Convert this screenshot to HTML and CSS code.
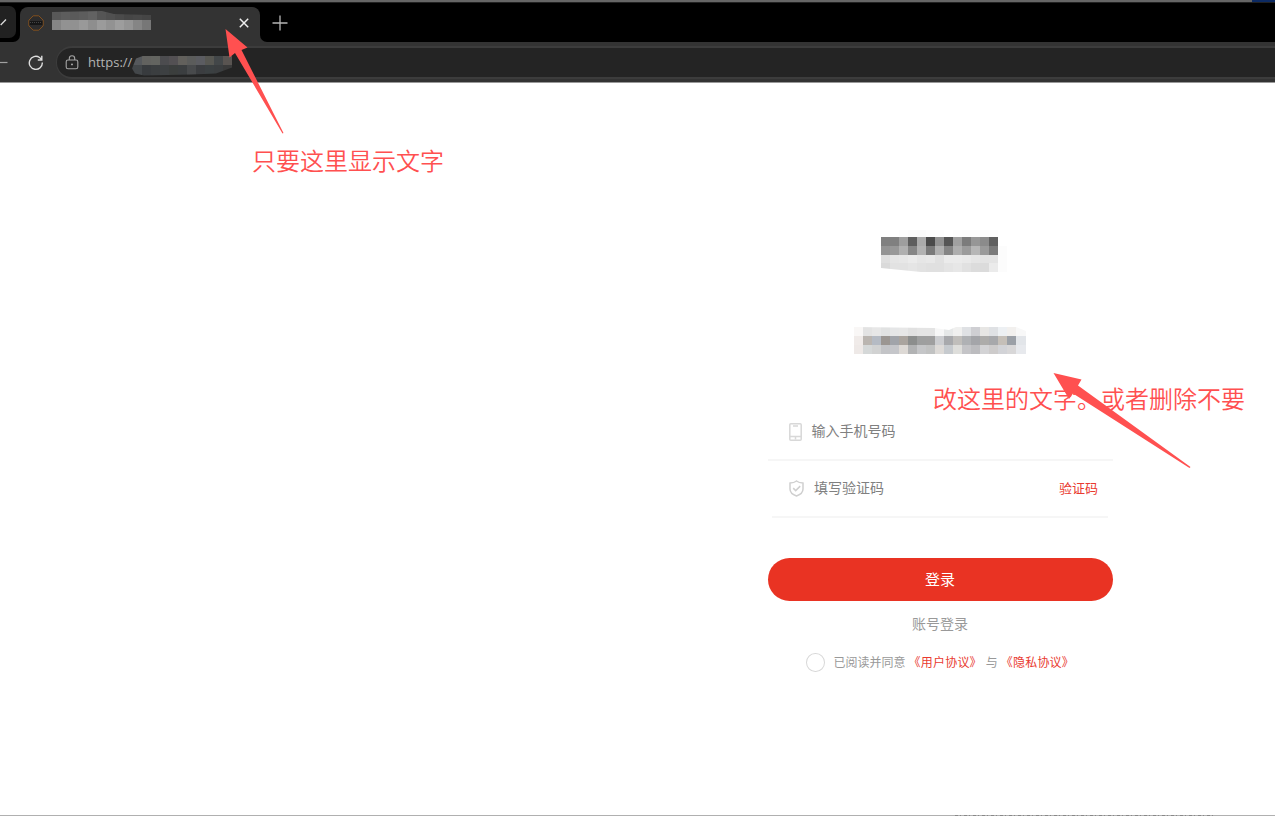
FILE: index.html
```
<!DOCTYPE html>
<html lang="zh-CN">
<head>
  <meta charset="UTF-8" />
  <meta name="viewport" content="width=device-width, initial-scale=1.0"/>
  <title>登录</title>
  <link rel="stylesheet" href="styles.css">
</head>
<body>
  <div class="desktop-edge"><span></span></div>

  <header class="browser">
    <div class="tabs">
      <div class="tab-list">
        <svg width="16" height="35" viewBox="0 0 16 35"><path d="M0 20.800l5.800-6" fill="none" stroke="#ddd" stroke-width="1.400"/></svg>
      </div>
      <div class="tab">
        <svg class="favicon" width="16" height="16" viewBox="0 0 16 16">
          <path d="M5.2.8h5.6l4.4 4.4v5.6l-4.4 4.4H5.2L.8 10.800V5.200z" fill="#2d2c2c" stroke="#82501f"/>
          <path d="M1.500 6h13v4h-13z" fill="#161616"/>
          <path d="M2 7.500h12" stroke="#444" stroke-dasharray="1 1"/>
        </svg>
        <svg class="mosaic tab-title" id="tabTitle" width="99" height="19"></svg>
        <svg class="close" width="10" height="10" viewBox="0 0 10 10"><path d="M.8.8l8.400 8.400M9.200.8L.8 9.200" stroke="#eee" stroke-width="1.500"/></svg>
      </div>
      <div class="tab-rest">
        <svg class="new-tab" width="16" height="16" viewBox="0 0 16 16"><path d="M8 .5v15M.5 8h15" stroke="#b5b5b5" stroke-width="1.300"/></svg>
      </div>
    </div>
    <div class="toolbar">
      <svg class="back" width="8" height="16" viewBox="0 0 8 16"><path d="M0 7.500h7.500" stroke="#a0a0a0" stroke-width="1.200"/></svg>
      <svg class="reload" width="16" height="16" viewBox="0 0 16 16"><path d="M14.300 7.500A6.500 6.500 0 1 1 11.500 2.500L13.500 4.200M13.800.8v4.200H9.800" fill="none" stroke="#ddd" stroke-width="1.400"/></svg>
      <div class="address">
        <svg width="14" height="15" viewBox="0 0 14 15"><rect x="1.200" y="5" width="11.600" height="8.800" rx="1.800" fill="none" stroke="#a5a5a5" stroke-width="1.100"/><path d="M4.300 5V3.500a2.700 2.700 0 0 1 5.400 0V5" fill="none" stroke="#a5a5a5" stroke-width="1.100"/><circle cx="7" cy="9.400" r=".9" fill="#bbb"/></svg>
        <span>https://</span>
        <svg class="mosaic url" id="urlText" width="100" height="20"></svg>
      </div>
    </div>
  </header>

  <main class="page">
    <div class="login">
      <svg class="mosaic logo" id="logo" width="126" height="42"></svg>
      <svg class="mosaic slogan" id="slogan" width="172" height="27"></svg>

      <div class="field phone">
        <svg width="13" height="18" viewBox="0 0 13 18" fill="none" stroke="#d8d8d8" stroke-width="1.500"><rect x=".8" y=".8" width="11.400" height="16.400" rx="1"/><path d="M4 3h5M1 13.500h11M6.500 13.500v3"/></svg>
        <label>输入手机号码</label>
      </div>
      <div class="field code">
        <svg width="15" height="17" viewBox="0 0 15 17" fill="none" stroke="#cfcfcf" stroke-width="1.500"><path d="M7.500 1C5.700 2.400 3.500 3 1 3.100V9c0 3.300 2.800 5.700 6.500 7 3.700-1.300 6.500-3.700 6.500-7V3.100C11.500 3 9.300 2.400 7.500 1z"/><path d="M4.200 8.100l2.500 2.500 4.500-4.500"/></svg>
        <label>填写验证码</label>
        <a class="get-code">验证码</a>
      </div>

      <button class="btn">登录</button>
      <a class="switch">账号登录</a>
      <div class="agree">
        <span class="radio"></span>
        <span>已阅读并同意</span>
        <a class="user">《用户协议》</a>
        <span>与</span>
        <a class="privacy">《隐私协议》</a>
      </div>
    </div>
  </main>
  <footer class="page-edge"><span></span></footer>

  <div class="note note-tab">只要这里显示文字</div>
  <div class="note note-slogan">改这里的文字。或者删除不要</div>
  <svg class="arrows" width="1275" height="816" viewBox="0 0 1275 816">
    <path d="M225.500 29L247.500 47.500 241.500 50 283.500 133 282.500 133.500 235 53 229.500 57.500z"/>
    <path d="M1053.500 373L1081.500 379.500 1078 385.500 1190.500 467 1189.500 468 1073 393.500 1069 399z"/>
  </svg>

  <script>
    // rows of hex colours, one cell each, 9px wide; '-' leaves the cell empty
    function mosaic(id, x, y, cellHeights, rows) {
      const svg = document.getElementById(id);
      let top = y;
      rows.forEach((row, r) => {
        row.split(' ').forEach((color, c) => {
          if (color === '-') return;
          const rect = document.createElementNS('http://www.w3.org/2000/svg', 'rect');
          rect.setAttribute('x', x + c * 9);
          rect.setAttribute('y', top);
          rect.setAttribute('width', 9);
          rect.setAttribute('height', cellHeights[r]);
          rect.setAttribute('fill', '#' + color);
          svg.appendChild(rect);
        });
        top += cellHeights[r];
      });
    }

    mosaic('tabTitle', 0, 0, [9, 10], [
      '585858 5d5d5d 5a5a5a 5d5d5d 626262 555555 505050 4b4b4b 464646 484848 454545',
      '858585 929292 919191 999999 8e8e8e 9b9b9b 929292 9d9d9d 949494 858585 777777'
    ]);
    mosaic('urlText', -8, 0, [9, 11], [
      '4a4d50 55585c 62625f 636460 4c4c4f 535053 62605c 5b5c5b 5b5c61 575752 434749 595451',
      '404347 43474a 383b3e 3b3e40 3d4042 3b3e3d 3b3e40 484a4c 3b3d40 3b4042 3b3e40 3a3a3a'
    ]);
    mosaic('logo', 0, 0, [7, 9, 9, 8, 10], [
      '- - fdfdfd fbfbfb fafafa fcfcfc fdfdfd - fdfdfd fcfcfc fcfcfc fcfcfc fdfdfd -',
      '808080 808080 9e9e9e 5d5d5d aaaaaa 4a4a4a 929292 555555 a0a0a0 7b7b7b 969696 8b8b8b 606060 -',
      '949494 989898 b0b0b0 868686 b2b2b2 7a7a7a b0b0b0 858585 aeaeae 9b9b9b b6b6b6 9a9a9a 7b7b7b fcfcfc',
      'dfdfdf e5e5e5 e7e7e7 ebebeb e6e6e6 e8e8e8 e1e1e1 ebebeb ebebeb e9e9e9 e5e5e5 e3e3e3 e4e4e4 fcfcfc',
      'dadada e2e2e2 e2e2e2 e5e5e5 e2e2e2 e0e0e0 e0e0e0 e4e4e4 e7e7e7 e1e1e1 dcdcdc dbdbdb ebebeb fcfcfc'
    ]);
    mosaic('slogan', 0, 0, [9, 9, 9], [
      'f9f7f6 e3e3e3 e7e7e7 e1e2e2 e5e6e7 e7e7e7 e1e1e1 e4e4e4 e4e4e4 f7f7f7 e6e8e8 f0f0ef dfe1e4 cfcfd3 e7e6e4 dfe1e4 edf0f3 f2f0ee f8f8f8 f8f8f8',
      'f0ebe9 bab5b0 b5bbc4 9b9692 a1a4aa aaa49e 8c8e8d 9e9f9f 9f9f9f cccdd0 a8a9ac c0bebb afb1b4 a4a5a9 adacaa a7a8ab c5bfb8 9ba0a7 e2e5e9 e2e5e9',
      'eee9e7 d5d8d8 d1d2d2 c3c4c7 c5c6ca ddd9d5 b2b3b4 c5c6c8 c1c2c2 dddad7 c6cace dededb c4c4c7 bcbcbf d3d3d5 cdcbcb d2d3d7 d8d7d8 e7e9ed e7e9ed'
    ]);
  </script>
</body>
</html>
```
FILE: styles.css
```
* {
  box-sizing: border-box;
}
body {
  margin: 0;
  height: 816px;
  display: flex;
  flex-direction: column;
  overflow: hidden;
  background: #fff;
  font-family: "Noto Sans CJK SC", sans-serif;
}
svg {
  display: block;
  flex: none;
}
.mosaic {
  shape-rendering: crispEdges;
}
.desktop-edge {
  height: 3px;
  background: #666;
  border-bottom: 1px solid #222;
  display: flex;
  justify-content: flex-end;
}
.desktop-edge span {
  width: 23px;
  height: 2px;
  background: #0c2a63;
}
.browser {
  height: 80px;
  background: #333;
  border-bottom: 1px solid #999;
}
.tabs {
  height: 39px;
  display: flex;
  background: linear-gradient(#000 20px, #333 20px);
}
.tab-list {
  width: 20px;
  height: 39px;
  background: #000;
  padding-top: 3px;
  border-bottom-right-radius: 7px;
}
.tab-list svg {
  height: 32px;
  background: #212121;
  border-radius: 0 7px 7px 0;
}
.tab {
  width: 240px;
  height: 35px;
  padding: 4px 11px 0 8px;
  display: flex;
  background: #333;
  border-radius: 8px 8px 0 0;
  margin-top: 4px;
}
.tab-rest {
  flex: 1;
  background: #000;
  border-bottom-left-radius: 7px;
}
.favicon {
  margin-top: 4px;
}
.tab-title {
  margin-left: 8px;
  clip-path: polygon(0 1px, 50px 0, 62px 3px, 99px 4px, 99px 19px, 0 19px);
}
.close {
  margin: 7px 0 0 auto;
}
.new-tab {
  margin: 12px 0 0 12px;
}
.toolbar {
  height: 40px;
  padding-top: 1px;
  display: flex;
  align-items: center;
  background: #333;
}
.reload {
  margin-left: 20px;
}
.address {
  flex: 1;
  height: 33px;
  margin-left: 12px;
  padding-left: 8px;
  display: flex;
  align-items: center;
  background: #242424;
  border: 2px solid #3c3c3c;
  border-width: 2px 0 2px 1px;
  border-radius: 16px 0 0 16px;
}
.address span {
  margin: -1px 0 0 9px;
  width: 44px;
  font: 13px "Open Sans", sans-serif;
  color: #b3b3b3;
}
.url {
  margin-top: 6px;
  clip-path: polygon(4px 3px, 12px 0, 100px 0, 100px 12px, 84px 18px, 60px 19px, 12px 20px, 3px 18px, 0 13px);
}
.page {
  flex: 1;
  padding: 147px 0 0 767px;
}
.page-edge {
  height: 1px;
  background: #b0b0b0;
}
/* tops of the text line that the window bottom cuts off */
.page-edge span {
  display: block;
  width: 260px;
  height: 1px;
  margin-left: 955px;
  background: repeating-linear-gradient(90deg, #888 0 3px, #b0b0b0 3px 5px, #888 5px 6px, #b0b0b0 6px 9px);
}
.login {
  width: 346px;
  display: flex;
  flex-direction: column;
  align-items: center;
}
.logo {
  margin-left: 8px;
  clip-path: polygon(0 0, 100% 0, 100% 42px, 40px 42px, 0 38px);
}
.slogan {
  margin-top: 55px;
  clip-path: polygon(0 0, 80px 1px, 95px 3px, 102px 0, 162px 0, 172px 4px, 172px 27px, 0 27px);
}
.field {
  height: 57px;
  padding-bottom: 3px;
  display: flex;
  align-items: center;
  font-size: 14px;
  line-height: 20px;
  color: #808080;
  border-bottom: 2px solid #f6f6f6;
}
.phone {
  width: 345px;
  margin-top: 50px;
  padding-left: 21px;
}
.phone svg {
  margin-top: 3px;
}
.phone label {
  margin: -1px 0 0 10px;
}
.code {
  width: 336px;
  padding-left: 17px;
  padding-right: 10px;
}
.code svg {
  margin-top: 2px;
}
.code label {
  margin: -1px 0 0 10px;
}
.get-code {
  margin: 1px 0 0 auto;
  font-size: 13px;
  color: #e93a30;
}
.btn {
  width: 345px;
  height: 43px;
  margin-top: 40px;
  padding: 0 0 3px;
  border: 0;
  border-radius: 22px;
  background: #e93323;
  color: #fff;
  font-family: inherit;
  font-size: 15px;
}
.switch {
  margin-top: 12px;
  font-size: 14px;
  line-height: 20px;
  color: #999;
}
.agree {
  width: 268px;
  height: 20px;
  margin-top: 19px;
  display: flex;
  align-items: center;
  font-size: 12px;
  line-height: 18px;
  padding-bottom: 1px;
  color: #999;
  white-space: nowrap;
}
.agree .radio {
  width: 19px;
  height: 19px;
  margin: 2px 9px 0 0;
  border: 1px solid #d8d8d8;
  border-radius: 50%;
}
.agree a {
  color: #e93a30;
  letter-spacing: .2px;
}
.user {
  margin: 0 4px 0 3px;
}
.privacy {
  margin-left: 3px;
}
.note {
  position: absolute;
  color: #ff5050;
  font-size: 24px;
  font-weight: 350;
  line-height: 36px;
  white-space: nowrap;
}
.note-tab {
  left: 252px;
  top: 142px;
}
.note-slogan {
  left: 933px;
  top: 380px;
}
.arrows {
  position: absolute;
  left: 0;
  top: 0;
  fill: #ff5050;
}
```
